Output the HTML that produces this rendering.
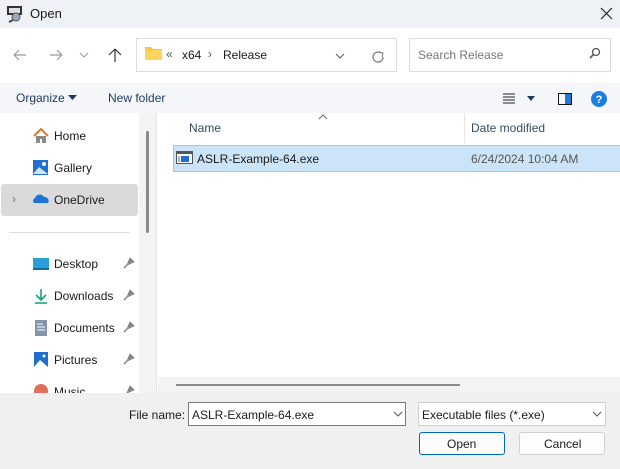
<!DOCTYPE html>
<html><head><style>
*{margin:0;padding:0;box-sizing:border-box}
body{width:620px;height:469px;position:relative;overflow:hidden;background:#fff;font-family:"Liberation Sans",sans-serif;font-size:12px;color:#1a1a1a}
.a{position:absolute}
.t{white-space:nowrap}
</style></head><body>
<div class="a" style="left:0;top:0;width:620px;height:28px;background:#eef2f7"></div>
<svg class="a" style="left:6px;top:5px" width="18" height="18"><rect x="1" y="1" width="15" height="9" fill="#333"/><rect x="3" y="3" width="11" height="5" fill="#ddd"/><circle cx="10" cy="12" r="4" fill="#9ab" stroke="#555"/><line x1="7" y1="15" x2="3" y2="17" stroke="#444" stroke-width="2"/></svg>
<div class="a t" style="left:30px;top:6px;font-size:13px">Open</div>
<svg class="a" style="left:600px;top:7px" width="13" height="13"><path d="M1 1L12 12M12 1L1 12" stroke="#222" stroke-width="1.2"/></svg>

<svg class="a" style="left:10px;top:46px" width="120" height="18"><path d="M4 9H16M4 9L9 4M4 9L9 14" stroke="#999" fill="none" stroke-width="1.2"/><path d="M40 9H52M52 9L47 4M52 9L47 14" stroke="#999" fill="none" stroke-width="1.2"/><path d="M70 7L74 11L78 7" stroke="#999" fill="none"/><path d="M105 16V3M105 3L99 9M105 3L111 9" stroke="#333" fill="none" stroke-width="1.2"/></svg>
<div class="a" style="left:136px;top:38px;width:261px;height:34px;border:1px solid #dcdcdc"></div>
<svg class="a" style="left:144px;top:45px" width="20" height="16"><path d="M1 2h6l2 2h9v11H1z" fill="#f5c542"/><path d="M1 5h17v10H1z" fill="#ffd45e"/></svg>
<div class="a t" style="left:166px;top:47px;color:#555">«</div>
<div class="a t" style="left:182px;top:48px">x64</div>
<div class="a t" style="left:208px;top:47px;color:#555">›</div>
<div class="a t" style="left:223px;top:48px">Release</div>
<svg class="a" style="left:334px;top:50px" width="60" height="16"><path d="M2 4L6 8L10 4" stroke="#555" fill="none"/><path d="M47 3A5 5 0 1 0 49 7" stroke="#777" fill="none" stroke-width="1.2"/><path d="M45 2L49 3L48 7" stroke="#777" fill="none"/></svg>
<div class="a" style="left:409px;top:38px;width:202px;height:34px;border:1px solid #dcdcdc"></div>
<div class="a t" style="left:418px;top:48px;color:#777">Search Release</div>
<svg class="a" style="left:588px;top:47px" width="14" height="14"><circle cx="8" cy="5" r="3.5" stroke="#555" fill="none" stroke-width="1.3"/><path d="M5.5 7.5L2 11" stroke="#555" stroke-width="1.6"/></svg>

<div class="a" style="left:0;top:83px;width:620px;height:30px;background:#f4f6f9"></div>
<div class="a t" style="left:16px;top:91px;color:#1f3a5f">Organize</div>
<svg class="a" style="left:68px;top:95px" width="10" height="6"><path d="M0 0h9L4.5 5z" fill="#1f3a5f"/></svg>
<div class="a t" style="left:108px;top:91px;color:#1f3a5f">New folder</div>
<svg class="a" style="left:502px;top:90px" width="110" height="18"><path d="M1 4h12M1 7h12M1 10h12M1 13h12" stroke="#222"/><path d="M25 6h8l-4 5z" fill="#1f3a5f"/><rect x="56.5" y="3.5" width="13" height="11" fill="none" stroke="#111"/><rect x="63" y="4" width="6" height="10" fill="#1e7ad6"/><circle cx="97" cy="9" r="8" fill="#1a7fe0"/><text x="97" y="13" font-size="11" font-weight="bold" fill="#fff" text-anchor="middle" font-family="Liberation Sans">?</text></svg>

<div class="a" style="left:139px;top:113px;width:17px;height:280px;background:#f3f3f3"></div>
<div class="a" style="left:146px;top:131px;width:3px;height:102px;background:#8a8a8a;border-radius:2px"></div>
<div class="a" style="left:156px;top:113px;width:1px;height:280px;background:#e5e5e5"></div>
<svg class="a" style="left:32px;top:127px" width="18" height="18"><path d="M2 9L9 2L16 9" stroke="#e07a2e" fill="none" stroke-width="2"/><path d="M4 9v7h4v-4h2v4h4V9" fill="#8a8a8a"/></svg>
<div class="a t" style="left:54px;top:129px">Home</div>
<svg class="a" style="left:32px;top:159px" width="18" height="18"><rect x="1" y="1" width="15" height="15" fill="#1e6fd0"/><path d="M1 15L7 8L16 15z" fill="#cfe4fa"/><circle cx="12" cy="5" r="2" fill="#fff"/></svg>
<div class="a t" style="left:54px;top:161px">Gallery</div>
<div class="a" style="left:1px;top:184px;width:137px;height:32px;background:#dadada;border-radius:3px"></div>
<div class="a t" style="left:12px;top:192px;color:#777">›</div>
<svg class="a" style="left:32px;top:193px" width="18" height="12"><path d="M2 10a3 3 0 0 1 1-5a5 5 0 0 1 9-1a4 4 0 0 1 4 6z" fill="#1a73d6"/></svg>
<div class="a t" style="left:54px;top:193px">OneDrive</div>
<div class="a" style="left:9px;top:232px;width:121px;height:1px;background:#ddd"></div>
<svg class="a" style="left:32px;top:256px" width="18" height="16"><rect x="1" y="2" width="16" height="11" fill="#2aa0d8"/><rect x="1" y="12" width="16" height="2" fill="#1a6aa0"/></svg>
<div class="a t" style="left:54px;top:257px">Desktop</div>
<svg class="a" style="left:32px;top:287px" width="18" height="18"><path d="M9 2v11M4 8l5 5l5-5" stroke="#1aa37a" fill="none" stroke-width="1.6"/><path d="M3 16h12" stroke="#1aa37a" stroke-width="1.6"/></svg>
<div class="a t" style="left:54px;top:289px">Downloads</div>
<svg class="a" style="left:32px;top:319px" width="18" height="18"><rect x="3" y="1" width="12" height="16" fill="#8196ad"/><path d="M5 5h6M5 8h8M5 11h8" stroke="#fff"/></svg>
<div class="a t" style="left:54px;top:321px">Documents</div>
<svg class="a" style="left:32px;top:351px" width="18" height="18"><rect x="2" y="1" width="14" height="15" fill="#1e6fd0"/><path d="M2 16L8 9L16 16z" fill="#fff"/><circle cx="12" cy="5" r="1.5" fill="#fff"/></svg>
<div class="a t" style="left:54px;top:353px">Pictures</div>
<svg class="a" style="left:32px;top:382px" width="18" height="11"><circle cx="9" cy="9" r="7" fill="#e0705a"/></svg>
<div class="a t" style="left:54px;top:385px;height:8px;overflow:hidden">Music</div>
<svg class="a" style="left:122px;top:256px" width="14" height="140"><g fill="#888" stroke="#888"><path d="M5 9l3-7l4 4l-7 3z"/><path d="M6 8L2 12" fill="none" stroke-width="1.5"/><path d="M5 41l3-7l4 4l-7 3z"/><path d="M6 40L2 44" fill="none" stroke-width="1.5"/><path d="M5 73l3-7l4 4l-7 3z"/><path d="M6 72L2 76" fill="none" stroke-width="1.5"/><path d="M5 105l3-7l4 4l-7 3z"/><path d="M6 104L2 108" fill="none" stroke-width="1.5"/><path d="M5 137l3-7l4 4l-7 3z"/></g></svg>

<div class="a" style="left:464px;top:113px;width:1px;height:30px;background:#e5e5e5"></div>
<div class="a t" style="left:189px;top:121px;color:#3a4a5c">Name</div>
<svg class="a" style="left:318px;top:114px" width="10" height="6"><path d="M1 5L5 1L9 5" stroke="#666" fill="none"/></svg>
<div class="a t" style="left:471px;top:121px;color:#3a4a5c">Date modified</div>
<div class="a" style="left:173px;top:145px;width:447px;height:27px;background:#cce4f7;border:1px solid #99c9ef;border-right:none"></div>
<svg class="a" style="left:176px;top:151px" width="18" height="14"><rect x="0.5" y="0.5" width="16" height="12" fill="#fff" stroke="#555"/><rect x="1" y="1" width="16" height="2" fill="#555"/><rect x="5" y="5" width="8" height="6" fill="#1e6fd0"/><rect x="2" y="5" width="2" height="6" fill="#9bd"/></svg>
<div class="a t" style="left:197px;top:152px">ASLR-Example-64.exe</div>
<div class="a t" style="left:471px;top:152px;color:#555">6/24/2024 10:04 AM</div>
<div class="a" style="left:158px;top:377px;width:462px;height:16px;background:#f3f3f3"></div>
<div class="a" style="left:176px;top:384px;width:284px;height:2px;background:#8a8a8a"></div>

<div class="a" style="left:0;top:393px;width:620px;height:76px;background:#f0f0f0"></div>
<div class="a t" style="left:129px;top:408px">File name:</div>
<div class="a" style="left:188px;top:402px;width:218px;height:24px;background:#fff;border:1px solid #7a7a7a"></div>
<div class="a t" style="left:192px;top:408px">ASLR-Example-64.exe</div>
<svg class="a" style="left:393px;top:411px" width="10" height="6"><path d="M1 1L5 5L9 1" stroke="#555" fill="none"/></svg>
<div class="a" style="left:418px;top:402px;width:188px;height:24px;background:#fff;border:1px solid #cfcfcf"></div>
<div class="a t" style="left:422px;top:408px">Executable files (*.exe)</div>
<svg class="a" style="left:592px;top:411px" width="10" height="6"><path d="M1 1L5 5L9 1" stroke="#555" fill="none"/></svg>
<div class="a" style="left:419px;top:432px;width:86px;height:23px;background:#fdfdfd;border:1px solid #0067c0;border-radius:3px"></div>
<div class="a t" style="left:447px;top:437px">Open</div>
<div class="a" style="left:519px;top:432px;width:86px;height:23px;background:#fdfdfd;border:1px solid #d0d0d0;border-radius:3px"></div>
<div class="a t" style="left:544px;top:437px">Cancel</div>
</body></html>
